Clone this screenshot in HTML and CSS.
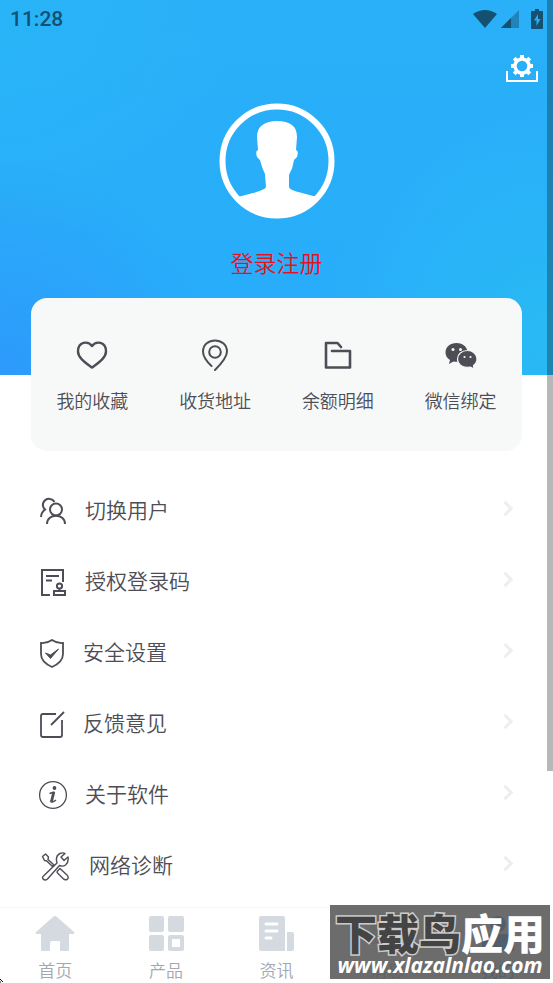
FILE: index.html
```
<!DOCTYPE html>
<html lang="zh-CN">
<head>
<meta charset="utf-8">
<meta name="viewport" content="width=device-width, initial-scale=1">
<title>我的</title>
<link rel="stylesheet" href="styles.css">
</head>
<body>
<header class="hero">
  <div class="status">
    <time>11:28</time>
    <div class="status-icons">
      <svg width="24" height="20" viewBox="0 0 24 20"><path fill="#14506f" d="M0 5Q12-3 24 5L12 19Z"/></svg>
      <svg width="18" height="20" viewBox="0 0 18 20"><path fill="#2184b9" d="M18 1V19H0Z"/><path fill="#14506f" d="M10 9V19H0Z"/></svg>
      <svg class="battery" width="12" height="20" viewBox="0 0 12 20"><path fill="#14506f" d="M1 2H4V0H8V2H11Q12 2 12 3V19Q12 20 11 20H1Q0 20 0 19V3Q0 2 1 2Z"/><path fill="#29acef" d="M7 5L3 11.500H5.500V17L9.500 10H7Z"/></svg>
    </div>
  </div>
  <div class="toolbar">
    <button class="plain" aria-label="设置">
      <svg width="32" height="28" viewBox="0 0 32 28" fill="none" stroke="#fff"><path stroke-width="2" d="M1 16V26H31V16"/><circle cx="16" cy="11" r="7" stroke-width="3.400"/><path stroke-width="4" d="M16 0V4M16 18V22M5 11H9M23 11H27M8.200 3.200L11 6M21 16L23.800 18.800M8.200 18.800L11 16M21 6L23.800 3.200"/></svg>
    </button>
  </div>
  <a class="profile" href="#login">
    <svg width="116" height="116" viewBox="0 0 116 116"><circle cx="58" cy="58" r="54.500" fill="none" stroke="#fff" stroke-width="6"/><path fill="#fff" d="M58 18C46 18 38 23 38 34L39 47Q36 48 38 54L41 57Q43 65 46 71L47 84Q46 87 34 90L19 94Q34 115 58 115Q82 115 98 94L83 90Q70 87 70 84L70 72Q74 65 75 57L78 54Q80 48 77 47L78 34C78 23 71 18 58 18Z"/></svg>
    <span>登录注册</span>
  </a>
</header>

<main>
  <section class="card">
    <a href="#fav">
      <svg width="32" height="32" viewBox="0 0 32 32" fill="none" stroke="#4d4d56" stroke-width="2.400" stroke-linejoin="round"><path d="M16 7C12 1.500 2 2.500 2 12.500C2 19 10 24 16 28.500C22 24 30 19 30 12.500C30 2.500 20 1.500 16 7Z"/></svg>
      <span>我的收藏</span>
    </a>
    <a href="#address">
      <svg width="32" height="32" viewBox="0 0 32 32" fill="none" stroke="#4d4d56" stroke-width="2" stroke-linecap="round"><path d="M12.500 27Q4 19 4 12.500C4 -2.300 28 -2.300 28 12.500Q28 19 16 31"/><circle cx="16" cy="13" r="5.800"/></svg>
      <span>收货地址</span>
    </a>
    <a href="#balance">
      <svg width="32" height="32" viewBox="0 0 32 32" fill="none" stroke="#4d4d56" stroke-width="2.600" stroke-linecap="round" stroke-linejoin="round"><path d="M19 8L15.500 4H4V28.500H28V12H10"/></svg>
      <span>余额明细</span>
    </a>
    <a href="#wechat">
      <svg width="32" height="32" viewBox="0 0 32 32"><path fill="#4d4d56" d="M11.500 4C5 4 .500 8 .500 13.500Q.500 18 5 21L4 25L8.500 22.500Q11 23 14 22.500Q22.500 20 22.500 12C21.500 7 17 4 11.500 4Z"/><path fill="#4d4d56" stroke="#f7f9f8" stroke-width="1.200" d="M22.500 11.500C16.500 11.500 12.500 15.500 12.500 20C12.500 25 17 28.600 22.500 28.400L25.500 28L29 30L28.500 26.500Q32 24 32 20C32 15.500 28 11.500 22.500 11.500Z"/><g fill="#f7f9f8"><circle cx="8" cy="10.500" r="1.500"/><circle cx="15.500" cy="10.500" r="1.500"/><circle cx="19.500" cy="18" r="1.100"/><circle cx="25.500" cy="18" r="1.100"/></g></svg>
      <span>微信绑定</span>
    </a>
  </section>

  <nav class="menu" aria-label="功能">
    <a href="#switch">
      <svg width="28" height="30" viewBox="0 0 28 30" fill="none" stroke="#4d4d56" stroke-width="2"><path d="M6 14C1 8 6 2 11 3Q14 3.400 15.500 6M7 13Q2 16 2 21"/><circle cx="17" cy="13.500" r="6"/><path d="M8 28C8 17 26 17 26 28"/></svg>
      <span>切换用户</span><i class="chevron"></i>
    </a>
    <a href="#code">
      <svg width="28" height="30" viewBox="0 0 28 30" fill="none" stroke="#4d4d56" stroke-width="2"><path d="M11 28H3V3H24V15M7 9H20M7 13.500H13M15 24H26V28H15Z"/><circle cx="20.500" cy="19" r="2.600"/><path d="M20.500 21V24"/></svg>
      <span>授权登录码</span><i class="chevron"></i>
    </a>
    <a href="#security">
      <svg width="26" height="30" viewBox="0 0 26 30" fill="none" stroke="#4d4d56" stroke-width="1.800"><path d="M13 2Q18 5.500 24 5V16Q24 24 13 29Q2 24 2 16V5Q8 5.500 13 2Z"/><path fill="#4d4d56" stroke-width="1" d="M6.500 15L11.500 17L19.500 11L11.500 20.500Z"/></svg>
      <span>安全设置</span><i class="chevron"></i>
    </a>
    <a href="#feedback">
      <svg width="26" height="30" viewBox="0 0 26 30" fill="none" stroke="#4d4d56" stroke-width="1.800"><path d="M17 5H4Q2 5 2 7V26Q2 28 4 28H21Q23 28 23 26V11M12 16L25 3"/></svg>
      <span>反馈意见</span><i class="chevron"></i>
    </a>
    <a href="#about">
      <svg width="28" height="30" viewBox="0 0 28 30" fill="none" stroke="#4d4d56"><circle cx="14" cy="15" r="13.400" stroke-width="1.300"/><circle cx="15.500" cy="8" r="1.900" fill="#4d4d56" stroke="none"/><path stroke-width="2.800" d="M14.800 12L12.500 21.500"/><path stroke-width="1.500" d="M10.500 13.500L15.500 12M11.500 21Q12.500 23.500 17 20"/></svg>
      <span>关于软件</span><i class="chevron"></i>
    </a>
    <a href="#network">
      <svg width="32" height="30" viewBox="0 0 32 30" fill="none" stroke="#4d4d56" stroke-width="1.400" stroke-linejoin="round"><path d="M4.500 25L18 12Q16 5 21 2.500Q24 1.200 26 2.500L22 6L25 9.500L29 6Q30 11 26.500 14Q24 16 20.500 14.500L8.500 28Q6 30 4.200 28Q2.800 26.500 4.500 25Z"/><path d="M3.500 5.500L6.500 3L9.500 6L9 8.500L15 14L13.500 15.500L7.500 9.800L5.500 9.500ZM18.500 20L21 17.500L28.500 24.500Q30 27 28 28.500Q26 29.500 24 27.500L18.500 22Q17.800 21 18.500 20Z"/></svg>
      <span>网络诊断</span><i class="chevron"></i>
    </a>
  </nav>
</main>

<nav class="tabs" aria-label="主导航">
  <a href="#home"><svg width="40" height="36" viewBox="0 0 40 36"><path fill="#d5dae1" d="M20 0Q21 0 22 1L39 16Q40 18 38 18H34V34Q34 35 33 35H26Q25 35 25 34V26Q25 25 24 25H17Q15 25 15 27V34Q15 35 14 35H7Q6 35 6 34V18H2Q0 18 1 16L18 1Q19 0 20 0Z"/></svg><span>首页</span></a>
  <a href="#products"><svg width="36" height="36" viewBox="0 0 36 36" fill="#d5dae1"><rect x="1" width="15" height="16" rx="2"/><rect x="20" width="16" height="16" rx="2"/><rect x="1" y="19" width="15" height="16" rx="2"/><path fill-rule="evenodd" d="M22 19H34Q36 19 36 21V33Q36 35 34 35H22Q20 35 20 33V21Q20 19 22 19ZM24 23V31H32V23Z"/></svg><span>产品</span></a>
  <a href="#news"><svg width="36" height="36" viewBox="0 0 36 36"><path fill="#d5dae1" d="M3 0H25Q27 0 27 2V35H3Q1 35 1 33V2Q1 0 3 0ZM29 17Q29 16 30 16H34Q36 16 36 18V33Q36 35 34 35H29Z"/><path stroke="#fff" stroke-width="3" stroke-linecap="round" d="M8 8H19M8 15H19M8 22H13"/></svg><span>资讯</span></a>
  <a href="#messages"><svg width="36" height="36" viewBox="0 0 36 36"><path fill="#d5dae1" d="M4 2H32Q35 2 35 5V25Q35 28 32 28H21L13 35V28H4Q1 28 1 25V5Q1 2 4 2Z"/></svg><span>消息</span></a>
  <a class="active" href="#me"><svg width="36" height="36" viewBox="0 0 36 36" fill="#2f8cf5"><circle cx="18" cy="8" r="8"/><path d="M2 35V27Q2 18 11 18H25Q34 18 34 27V35Z"/></svg><span>我的</span></a>
</nav>

<div class="watermark"><div class="wm-name"><span>下载鸟</span><b>应用</b></div><div class="wm-url">www.xlazalnlao.com</div></div>
<div class="scrollbar"></div>
<svg class="cursor" width="4" height="5" viewBox="0 0 4 5"><path stroke="#000" d="M0 1L3 4M0 4H1"/></svg>
</body>
</html>
```
FILE: styles.css
```
* { box-sizing: border-box; }
body {
  position: relative;
  display: flex;
  flex-direction: column;
  min-height: 100vh;
  margin: 0;
  background: #fff;
  color: #4d4d56;
  font-family: "Noto Sans CJK SC", sans-serif;
  font-weight: 350;
}
a { color: inherit; text-decoration: none; }
svg { display: block; flex: none; }
.plain { padding: 0; border: 0; background: none; }

.hero {
  padding-bottom: 95px;
  background:
    radial-gradient(circle at 0 100%, #2d9afb, transparent 32%),
    radial-gradient(circle at 100% 90%, #29baf4, transparent 36%),
    radial-gradient(circle at 0 0, #29b4f7, transparent 36%),
    linear-gradient(#29b0f8, #28acfb);
}
.status {
  display: flex;
  justify-content: space-between;
  align-items: center;
  height: 38px;
  padding: 0 10px;
  color: #14506f;
  font: 500 21px/38px Roboto, sans-serif;
}
.status-icons { display: flex; align-items: center; gap: 4px; }
.battery { margin-left: 8px; }
.toolbar { display: flex; justify-content: flex-end; padding: 17px 15px 0; }
.profile {
  display: flex;
  flex-direction: column;
  align-items: center;
  gap: 26px;
  margin-top: 20px;
  color: #e8101c;
  font-size: 23px;
  line-height: 35px;
}

.card {
  display: grid;
  grid-template-columns: repeat(4, 1fr);
  margin: -77px 31px 0;
  padding: 41px 0 37px;
  border-radius: 16px;
  background: #f7f9f8;
}
.card a {
  display: flex;
  flex-direction: column;
  align-items: center;
  gap: 16px;
  font-size: 18px;
  line-height: 27px;
}
.menu { padding: 24px 39px 0; }
.menu a {
  display: flex;
  align-items: center;
  gap: 18px;
  height: 71px;
  font-size: 21px;
}
.menu span { flex: 1; padding-bottom: 3px; }
.chevron {
  width: 11px;
  height: 11px;
  margin: 0 3px 4px 0;
  border: solid #eeeef1;
  border-width: 3px 3px 0 0;
  transform: rotate(45deg);
}

.tabs {
  display: grid;
  grid-template-columns: repeat(5, 1fr);
  margin-top: auto;
  padding: 8px 0 1px;
  border-top: 1px solid #f8f8f8;
}
.tabs a {
  display: flex;
  flex-direction: column;
  align-items: center;
  gap: 5px;
  color: #a3a8b0;
  font-size: 17px;
  line-height: 25px;
}
.tabs .active { color: #2f8cf5; }

.watermark {
  position: absolute;
  right: 3px;
  bottom: 4px;
  width: 220px;
  height: 74px;
  padding-top: 6px;
  background: rgba(88, 88, 88, .88);
  color: #fff;
  text-align: center;
  white-space: nowrap;
}
.wm-name {
  font-size: 42px;
  font-weight: 900;
  line-height: 42px;
}
.wm-name span {
  color: #444;
  -webkit-text-stroke: 3px #ccc;
  paint-order: stroke fill;
}
.wm-name b { font-weight: 900; }
.wm-url { font: italic 700 21px/24px "Open Sans", sans-serif; }
.scrollbar {
  position: absolute;
  top: 0;
  right: 0;
  width: 6px;
  height: 771px;
  background: rgba(0, 0, 0, .28);
}
.cursor { position: absolute; left: 0; bottom: 0; }
```
